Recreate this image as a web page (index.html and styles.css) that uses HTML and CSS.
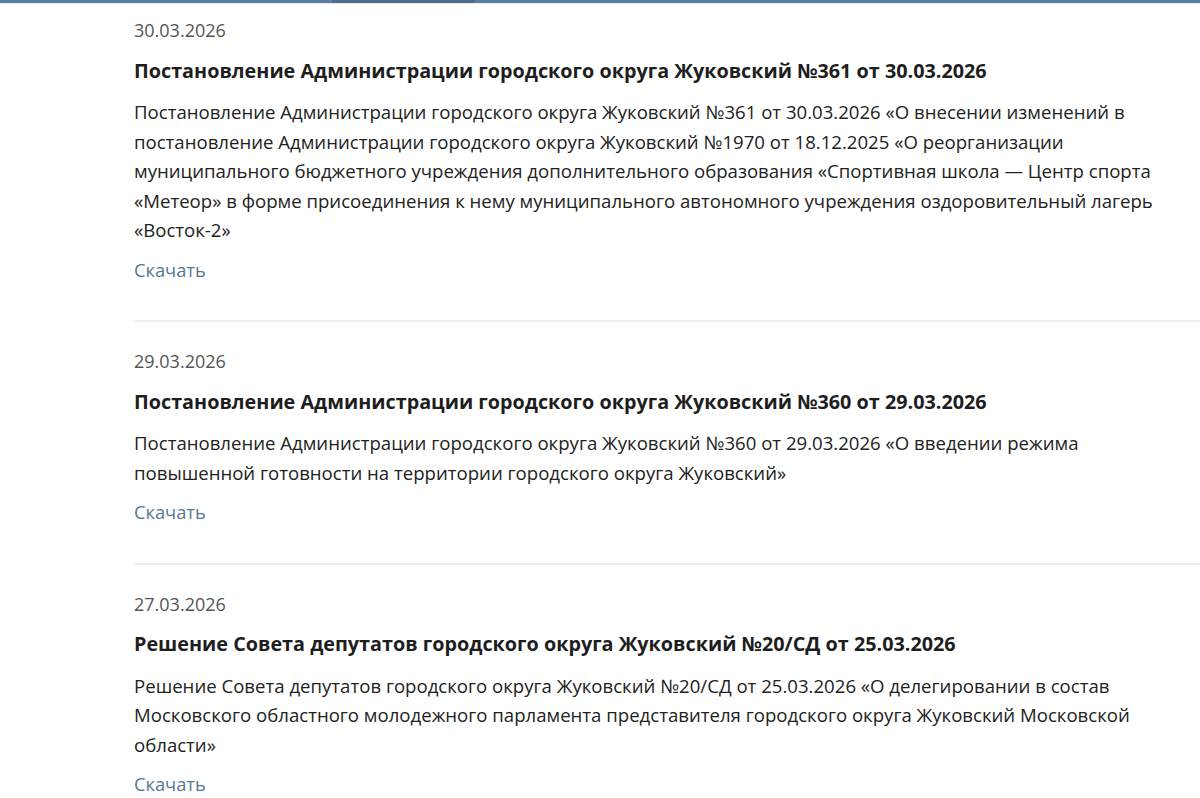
FILE: index.html
```html
<!DOCTYPE html>
<html lang="ru">
<head>
<meta charset="utf-8">
<title>Документы</title>
<link rel="stylesheet" href="styles.css">
</head>
<body>
<div class="topbar"><div class="topbar-active"></div></div>
<main class="list">
  <article class="item">
    <div class="date">30.03.2026</div>
    <h3 class="title">Постановление Администрации городского округа Жуковский №361 от 30.03.2026</h3>
    <p class="desc">Постановление Администрации городского округа Жуковский №361 от 30.03.2026 «О внесении изменений в постановление Администрации городского округа Жуковский №1970 от 18.12.2025 «О реорганизации муниципального бюджетного учреждения дополнительного образования «Спортивная школа — Центр спорта «Метеор» в форме присоединения к нему муниципального автономного учреждения оздоровительный лагерь «Восток-2»</p>
    <a class="link" href="#">Скачать</a>
  </article>
  <article class="item">
    <div class="date">29.03.2026</div>
    <h3 class="title">Постановление Администрации городского округа Жуковский №360 от 29.03.2026</h3>
    <p class="desc">Постановление Администрации городского округа Жуковский №360 от 29.03.2026 «О введении режима повышенной готовности на территории городского округа Жуковский»</p>
    <a class="link" href="#">Скачать</a>
  </article>
  <article class="item">
    <div class="date">27.03.2026</div>
    <h3 class="title">Решение Совета депутатов городского округа Жуковский №20/СД от 25.03.2026</h3>
    <p class="desc">Решение Совета депутатов городского округа Жуковский №20/СД от 25.03.2026 «О делегировании в состав Московского областного молодежного парламента представителя городского округа Жуковский Московской области»</p>
    <a class="link" href="#">Скачать</a>
  </article>
</main>
</body>
</html>
```

FILE: styles.css
```css
* { box-sizing: border-box; }
html, body { margin: 0; padding: 0; background: #ffffff; }
body {
  font-family: "Open Sans", "Noto Sans", sans-serif;
  color: #222222;
  overflow: hidden;
}
.topbar {
  height: 4px;
  background: #5b7f9c;
  border-bottom: 1px solid #e4edf4;
  position: relative;
}
.topbar-active {
  position: absolute;
  left: 332px;
  top: 0;
  width: 143px;
  height: 3px;
  background: #4c6c88;
}
.list {
  padding-left: 134px;
}
.item {
  padding: 12px 10px 36px 0;
  border-bottom: 2px solid #efefef;
}
.item + .item { padding-top: 25px; }
.date {
  font-size: 18px;
  line-height: 29.5px;
  color: #555555;
  margin-bottom: 10px;
}
.title {
  margin: 0 0 12px;
  font-size: 19.8px;
  line-height: 29.5px;
  font-weight: 700;
  color: #1e1e1e;
}
.desc {
  margin: 0 0 10px;
  font-size: 18.6px;
  line-height: 29.5px;
  color: #222222;
}
.link {
  display: inline-block;
  font-size: 18.3px;
  line-height: 29.5px;
  color: #567893;
  text-decoration: none;
}
```
